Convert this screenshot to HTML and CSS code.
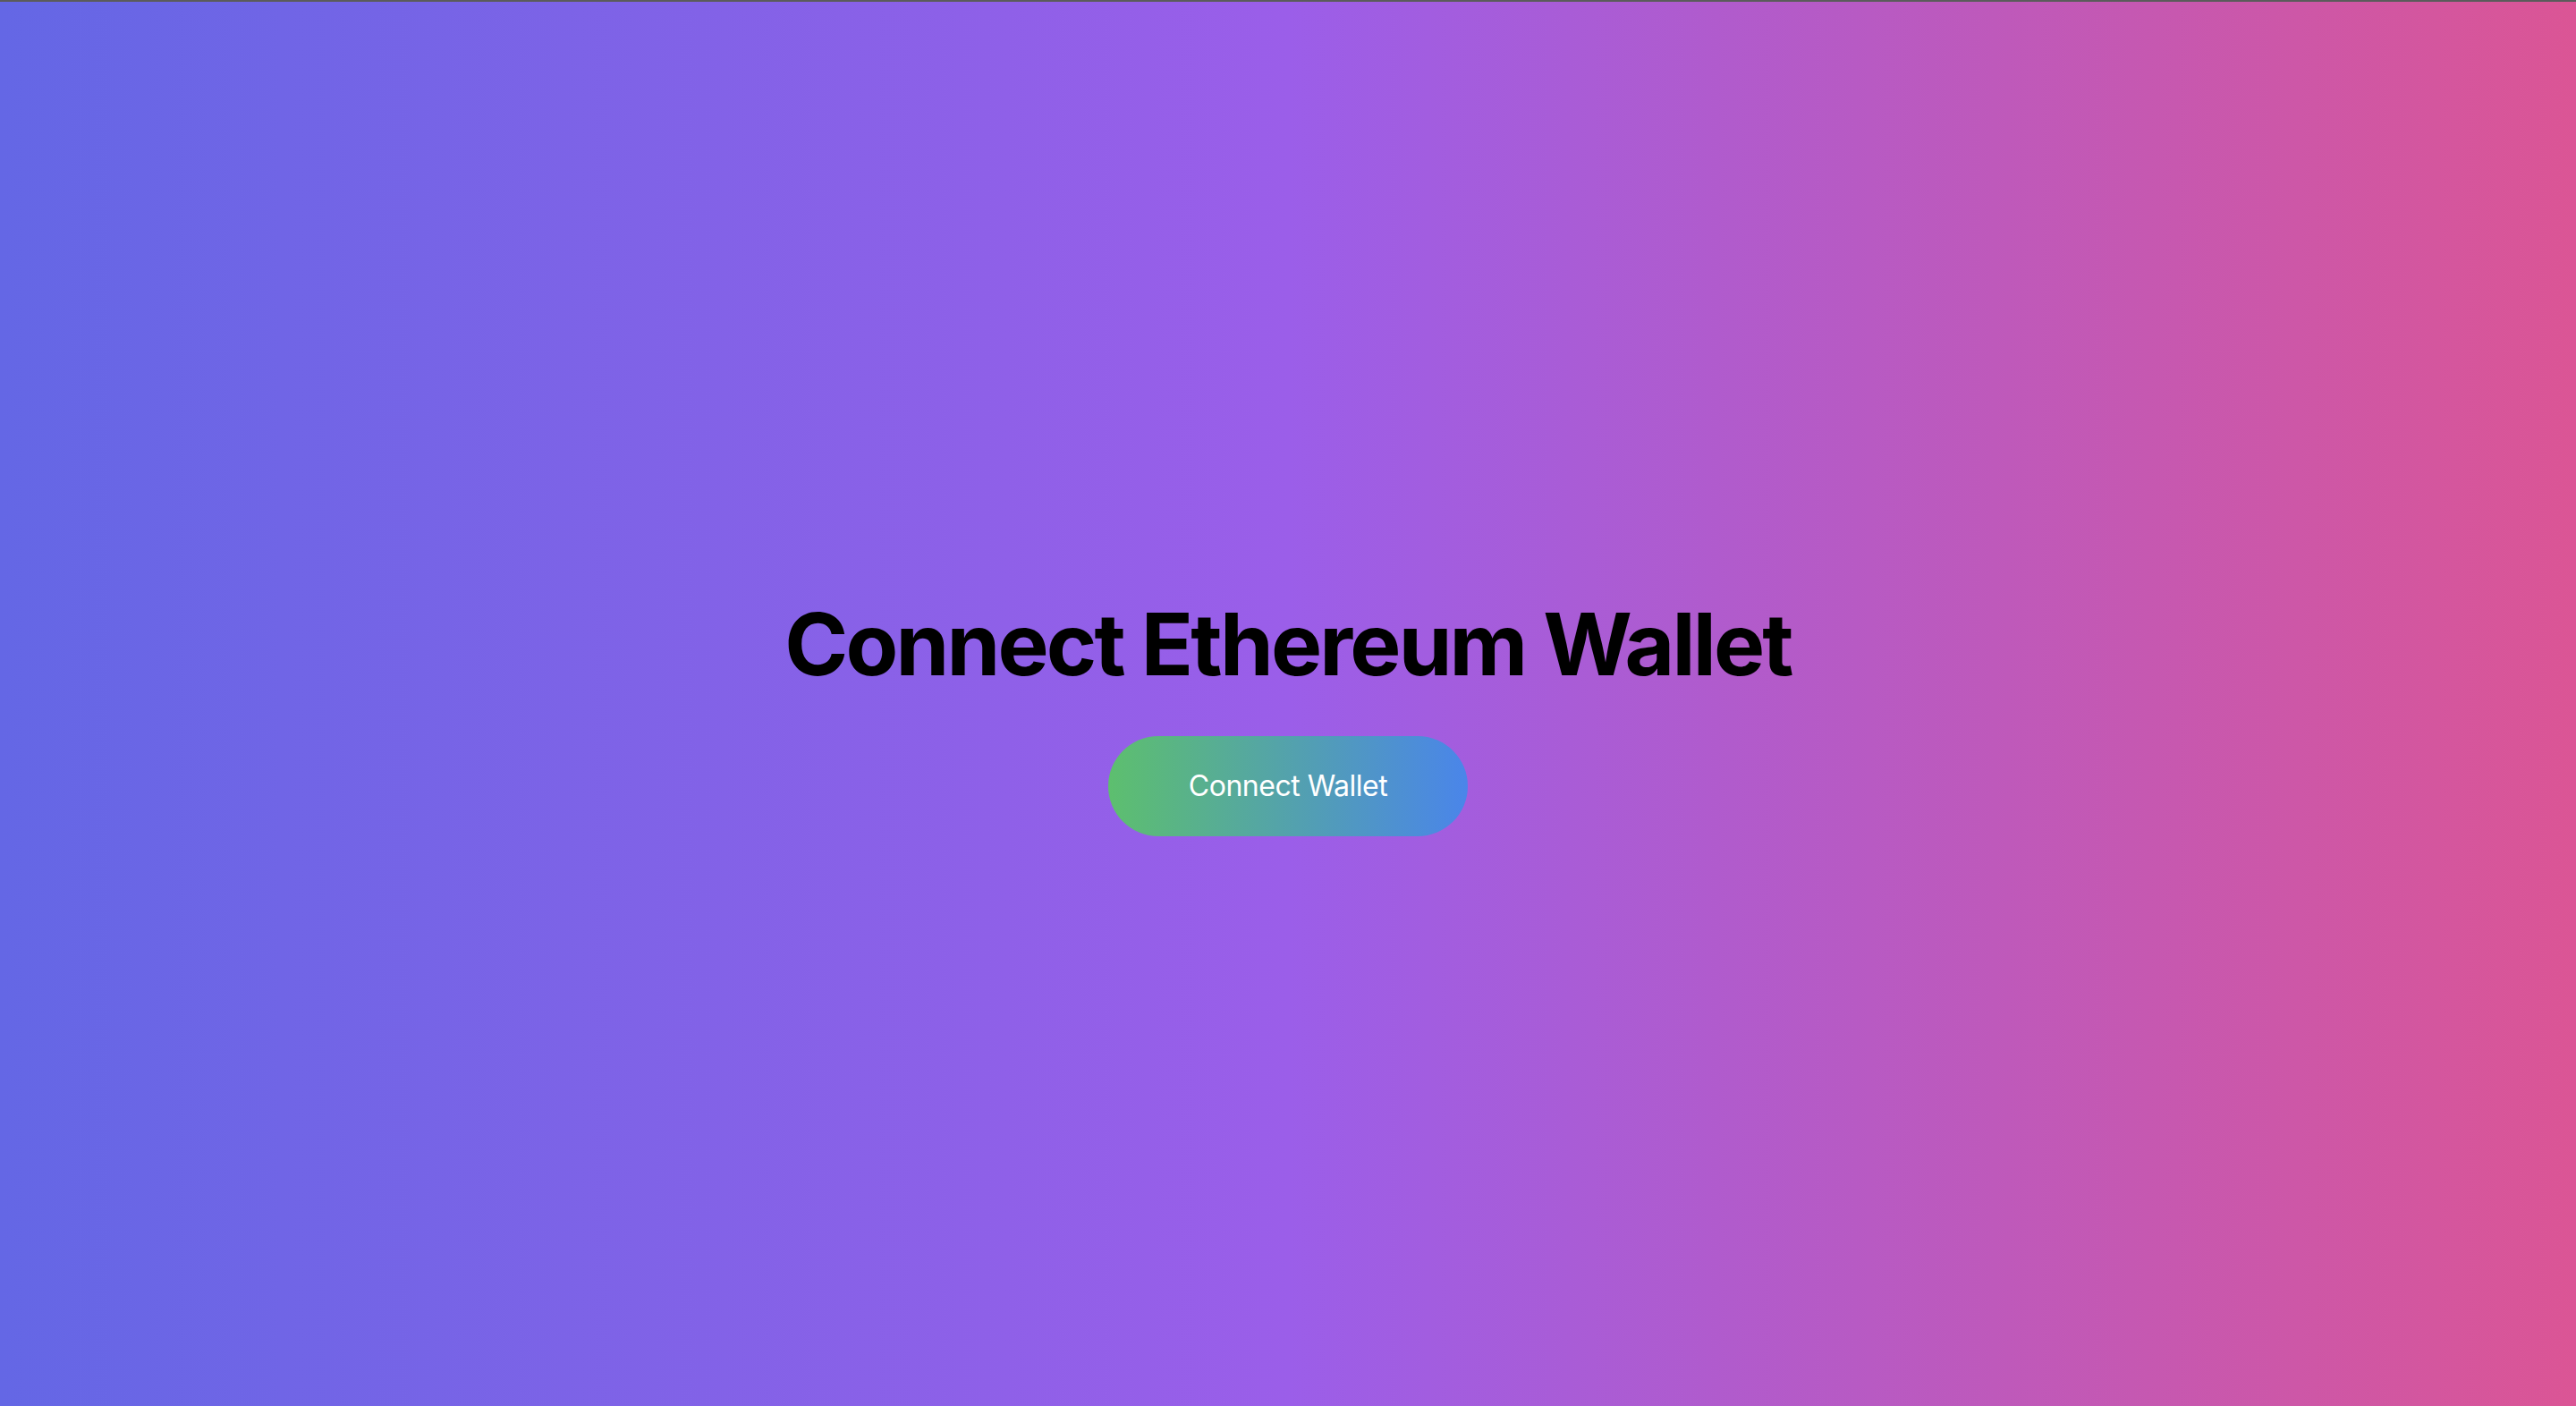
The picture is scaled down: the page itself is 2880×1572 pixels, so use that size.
FILE: index.html
```html
<!DOCTYPE html>
<html lang="en">
<head>
<meta charset="utf-8">
<title>Connect Ethereum Wallet</title>
<link rel="stylesheet" href="styles.css">
</head>
<body>
<main class="page">
  <h1 class="title">Connect Ethereum Wallet</h1>
  <button class="connect-btn" type="button">Connect Wallet</button>
</main>
</body>
</html>
```

FILE: styles.css
```css
html, body {
  margin: 0;
  padding: 0;
  height: 100%;
}

body {
  font-family: Inter, "Noto Sans", "Liberation Sans", sans-serif;
  border-top: 2px solid #5b5b5b;
  box-sizing: border-box;
  background: #6467e4;
}

.page {
  box-sizing: border-box;
  height: 1570px;
  padding-top: 32px;
  display: flex;
  flex-direction: column;
  align-items: center;
  justify-content: center;
  background: linear-gradient(to right, #6467e5 0%, #9b5ee9 50%, #db5595 100%);
}

.title {
  margin: 0 0 55px;
  font-size: 96px;
  line-height: 1;
  font-weight: 700;
  color: #000;
  letter-spacing: -2.8px;
}

.connect-btn {
  border: 0;
  border-radius: 9999px;
  padding: 32px 90px;
  font-family: inherit;
  font-size: 32px;
  line-height: 48px;
  font-weight: 400;
  letter-spacing: -0.5px;
  color: #fff;
  background: linear-gradient(to right, #5dbf6e, #4a85ea);
  cursor: pointer;
}
```
